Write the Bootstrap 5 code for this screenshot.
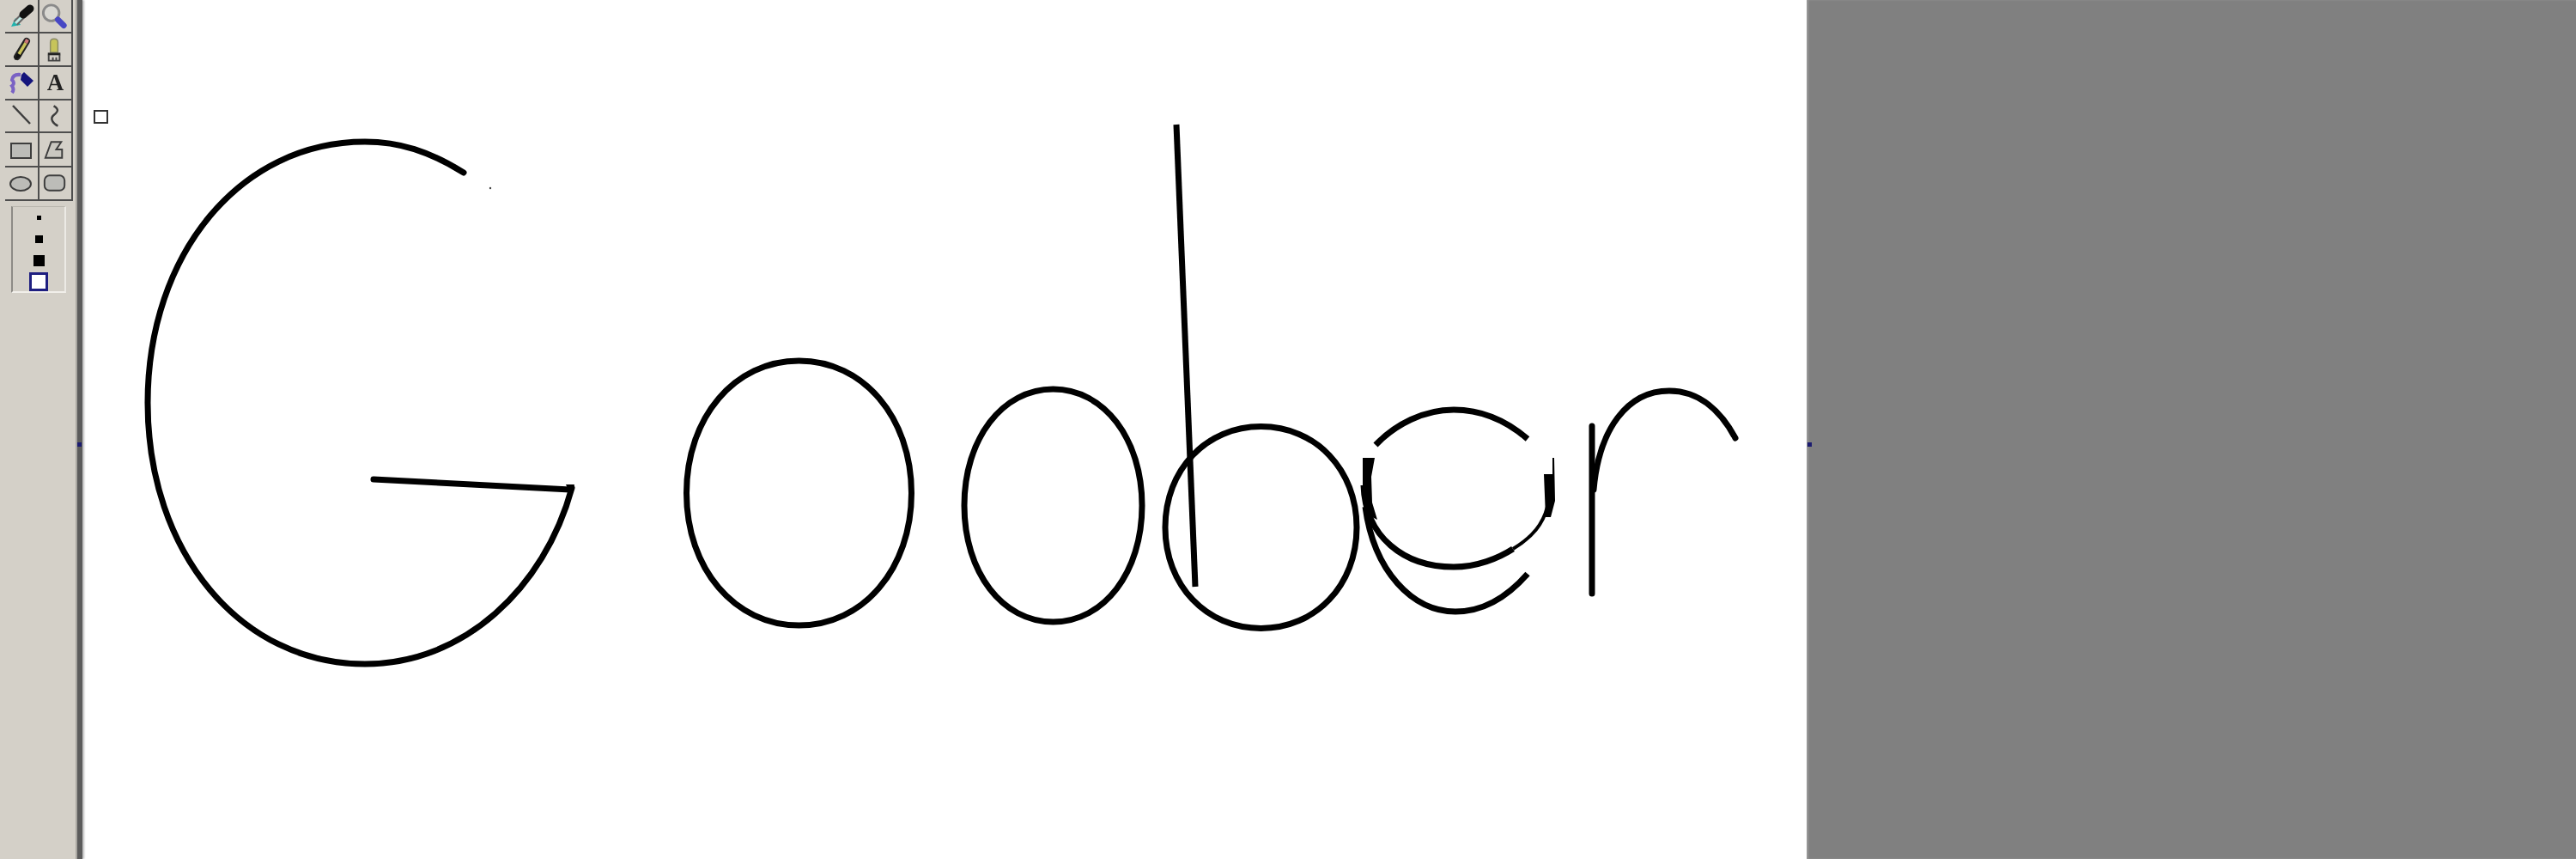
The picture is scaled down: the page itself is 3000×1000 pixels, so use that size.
<!DOCTYPE html>
<html lang="en">
<head>
<meta charset="utf-8">
<title>Goober</title>
<link rel="stylesheet" href="https://cdn.jsdelivr.net/npm/bootstrap@5.3.0/dist/css/bootstrap.min.css">
<style>
body { background:#fff; overflow:hidden; font-family:"Liberation Sans",sans-serif; }
.paint-shell { width:3000px; height:1000px; }
.tool-rail { width:96px; flex:none; background:#d4d0c8; position:relative; border-right:6px solid #5c5c5c; box-shadow:inset -2px 0 0 #a9a7a1, 2px 0 2px #bbb; padding:0 5px 0 6px; }
.tool-grid { display:grid; grid-template-columns:38px 37px; grid-template-rows:37px 37px 37px 36px 38px 37px; column-gap:2px; row-gap:2px; background:#4e4e4e; width:79px; padding:0 2px 2px 0; filter:blur(.55px); }
.tool-cell { background:#d4d0c8; display:flex; align-items:center; justify-content:center; overflow:hidden; }
.tool-cell svg { display:block; width:38px; height:37px; }
.tool-letter { font:bold 27px/1 "Liberation Serif",serif; color:#222; }
.size-box { width:64px; height:101px; margin:6px 0 0 7px; border-left:2px solid #8d8b86; border-top:1px solid #b9b6ae; border-right:2px solid #eceae5; border-bottom:2px solid #f1efea; padding-top:10px; filter:blur(.45px); }
.dot-s { width:5px; height:5px; background:#000; }
.dot-m { width:9px; height:9px; background:#000; margin-top:18px; }
.dot-l { width:13px; height:13px; background:#000; margin-top:14px; }
.dot-sel { width:22px; height:22px; background:#fff; border:3px solid #1e1e80; margin-top:7px; }
.paint-area { width:2008px; flex:none; background:#fff; }
.paint-area svg { display:block; width:2008px; height:1000px; filter:blur(.5px); }
.gray-pane { flex:1 1 auto; background:#808080; position:relative; box-shadow:inset 2px 0 2px #999; }
.edge-mark { position:absolute; top:515px; width:5px; height:5px; background:#1c1c70; filter:blur(.6px); }
.edge-left { right:-5px; }
.edge-right { left:1px; }
.ink { fill:none; stroke:#000; stroke-width:7; stroke-linecap:round; }
.ink-cut { fill:none; stroke:#000; stroke-width:7; stroke-linecap:butt; }
.ink-thin { fill:none; stroke:#000; stroke-width:4; stroke-linecap:butt; }
</style>
</head>
<body>
<div class="paint-shell d-flex">
  <aside class="tool-rail d-flex flex-column">
    <div class="tool-grid">
      <div class="tool-cell"><svg viewBox="0 0 38 37"><path d="M7 31 L18 29 L12 21 Z" fill="#1fb3ad"/><path d="M12 27 L22 17" stroke="#666" stroke-width="7"/><path d="M12 27 L22 17" stroke="#bfe9e5" stroke-width="3"/><path d="M21 17 L29 10" stroke="#111" stroke-width="9" stroke-linecap="round"/></svg></div>
      <div class="tool-cell"><svg viewBox="0 0 38 37"><circle cx="14" cy="15" r="9.500" fill="#d9d8d3" stroke="#8a8a8a" stroke-width="3"/><path d="M22 23 L29 30" stroke="#4747c4" stroke-width="7" stroke-linecap="round"/></svg></div>
      <div class="tool-cell"><svg viewBox="0 0 38 37"><path d="M25 9 L14 27" stroke="#222" stroke-width="8" stroke-linecap="round"/><path d="M24 11 L16 24" stroke="#c9c25a" stroke-width="3.500"/><path d="M26 7 L24 11" stroke="#c77" stroke-width="4"/><path d="M11 31 L14 23 L19 26 Z" fill="#111"/></svg></div>
      <div class="tool-cell"><svg viewBox="0 0 38 37"><path d="M13 22 V10 Q13 6 17.500 6 Q22 6 22 10 V22 Z" fill="#c7c45a" stroke="#8b8b66" stroke-width="1.500"/><path d="M10 24 H25" stroke="#222" stroke-width="3"/><path d="M11 25 V32 H24 V25 M16 28 V32 M20 28 V32" fill="none" stroke="#444" stroke-width="2"/></svg></div>
      <div class="tool-cell"><svg viewBox="0 0 38 37"><path d="M8 30 Q11 26 8 22 Q12 19 8 15 Q9 8 18 9" fill="none" stroke="#7a62c4" stroke-width="4"/><path d="M19 9 L22 6 L33 16 L26 23 L18 15 Z" fill="#14147c"/></svg></div>
      <div class="tool-cell"><span class="tool-letter">A</span></div>
      <div class="tool-cell"><svg viewBox="0 0 38 37"><path d="M9 6 L29 27" stroke="#3d3d3d" stroke-width="2.500"/></svg></div>
      <div class="tool-cell"><svg viewBox="0 0 38 37"><path d="M17 6 C24 10 22 13 17 17 C12 21 16 27 22 30" fill="none" stroke="#3d3d3d" stroke-width="2.500"/></svg></div>
      <div class="tool-cell"><svg viewBox="0 0 38 37"><rect x="7" y="11" width="23" height="17" fill="#bcbcb8" stroke="#3d3d3d" stroke-width="2"/></svg></div>
      <div class="tool-cell"><svg viewBox="0 0 38 37"><path d="M7 28 L14 9 H26 L20 18 H27 V28 Z" fill="#c9c7c0" stroke="#3d3d3d" stroke-width="2"/></svg></div>
      <div class="tool-cell"><svg viewBox="0 0 38 37"><ellipse cx="18" cy="19" rx="12" ry="8" fill="#bcbcb8" stroke="#3d3d3d" stroke-width="2"/></svg></div>
      <div class="tool-cell"><svg viewBox="0 0 38 37"><rect x="6" y="9" width="24" height="18" rx="6" fill="#bcbcb8" stroke="#3d3d3d" stroke-width="2"/></svg></div>
    </div>
    <div class="size-box d-flex flex-column align-items-center">
      <div class="dot-s"></div>
      <div class="dot-m"></div>
      <div class="dot-l"></div>
      <div class="dot-sel"></div>
    </div>
    <span class="edge-mark edge-left"></span>
  </aside>
  <main class="paint-area">
    <svg viewBox="96 0 2008 1000" aria-label="Goober">
      <rect x="110" y="129" width="15" height="14" fill="#fff" stroke="#333" stroke-width="2"/>
      <!-- G -->
      <path class="ink" d="M540 201 C500 176 465 165 425 165 C280.300 165 172 295.100 172 469 C172 642.900 280.300 773 425 773 C540 773 634 685 666 568"/>
      <path class="ink" d="M435 558 L664 570"/>
      <path d="M659 564 H669 L665 578 Z" fill="#000"/>
      <circle cx="571" cy="219" r="1.200" fill="#444"/>
      <!-- o o -->
      <path class="ink" d="M799.500 574 C799.500 485.900 855.600 420 930.500 420 C1005.400 420 1061.500 485.900 1061.500 574 C1061.500 662.100 1005.400 728 930.500 728 C855.600 728 799.500 662.100 799.500 574 Z"/>
      <path class="ink" d="M1123 588.500 C1123 511 1167.300 453 1226.500 453 C1285.700 453 1330 511 1330 588.500 C1330 666 1285.700 724 1226.500 724 C1167.300 724 1123 666 1123 588.500 Z"/>
      <!-- b -->
      <path class="ink-cut" d="M1370 145 L1392 683"/>
      <path class="ink" d="M1357 614 C1357 546.800 1404.700 496.500 1468.500 496.500 C1532.300 496.500 1580 546.800 1580 614 C1580 681.200 1532.300 731.500 1468.500 731.500 C1404.700 731.500 1357 681.200 1357 614 Z"/>
      <!-- e -->
      <path class="ink-cut" d="M1602 518 C1625 494 1658 477 1693 477 C1730 477 1757 492 1779 511"/>
      <path class="ink-cut" d="M1588 565 C1590 625 1635 660 1693 660 C1720 660 1745 650 1762 639"/>
      <path class="ink-thin" d="M1762 639 C1785 625 1797 610 1802 590"/>
      <path d="M1587 533 H1601 L1597 555 L1598 585 L1604 605 L1594 600 L1587 575 Z" fill="#000"/>
      <path class="ink-cut" d="M1590 590 C1600 665 1645 712 1695 712 C1730 712 1758 692 1779 668"/>
      <path d="M1798 552 H1808 V533 H1810 L1811 583 L1806 602 H1800 Z" fill="#000"/>
      <!-- r -->
      <path class="ink" d="M1854 496 L1854 691"/>
      <path class="ink" d="M1856 570 C1862 500 1895 455 1944 455 C1980 455 2005 480 2021 510"/>
    </svg>
  </main>
  <div class="gray-pane"><span class="edge-mark edge-right"></span></div>
</div>
<script src="https://cdn.jsdelivr.net/npm/bootstrap@5.3.0/dist/js/bootstrap.bundle.min.js"></script>
</body>
</html>
